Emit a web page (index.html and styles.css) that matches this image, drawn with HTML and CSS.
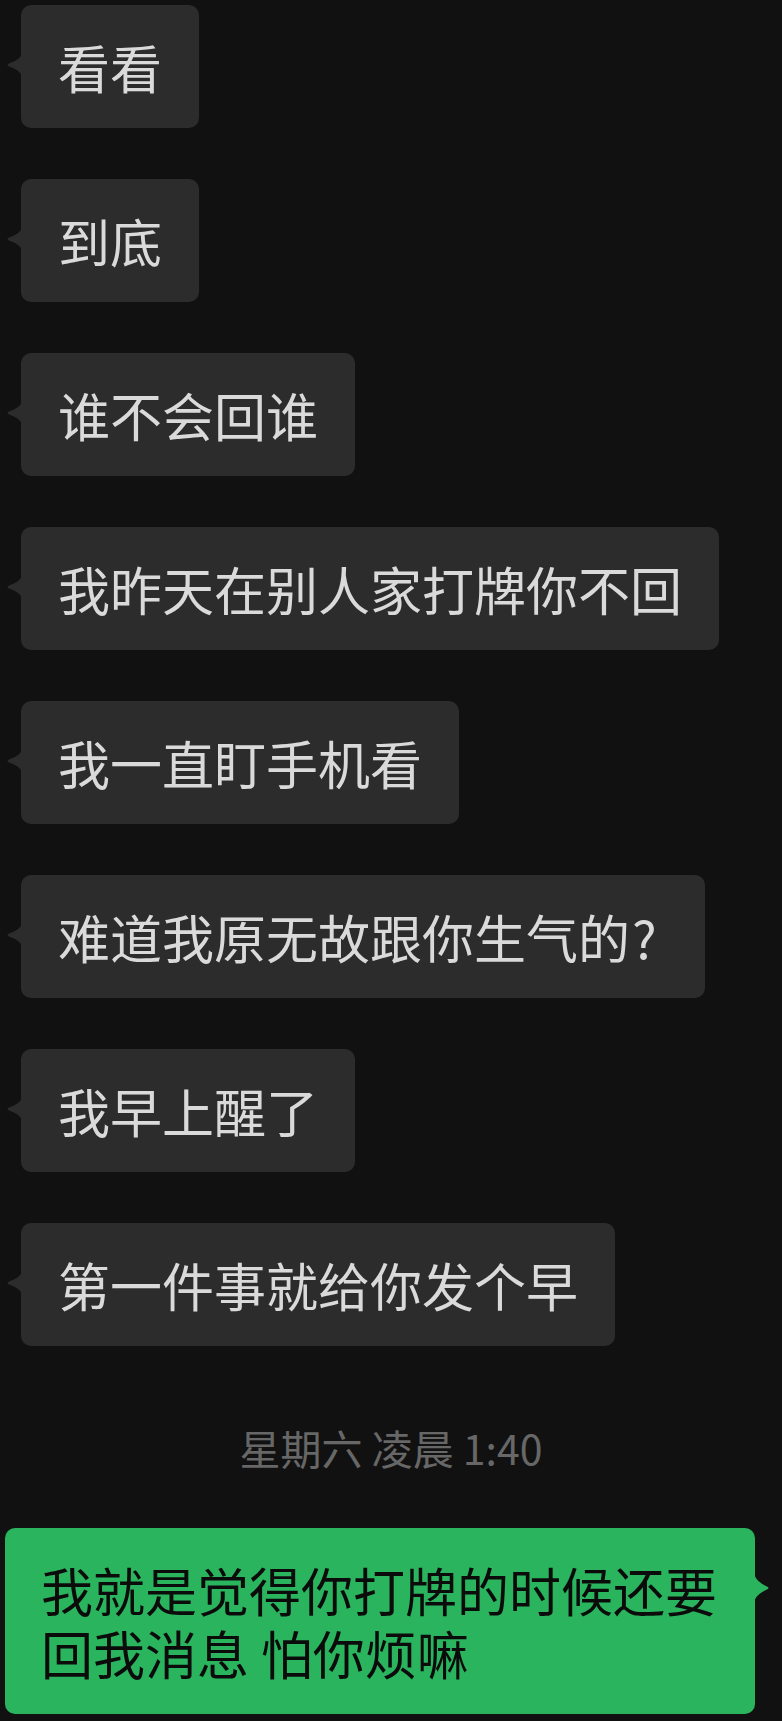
FILE: index.html
```html
<!DOCTYPE html>
<html lang="zh-CN">
<head>
  <meta charset="UTF-8" />
  <meta name="viewport" content="width=device-width, initial-scale=1.0"/>
  <title>聊天</title>
  <link rel="stylesheet" href="styles.css">
</head>
<body>
  <div class="chat">
    <div class="msg in">看看</div>
    <div class="msg in">到底</div>
    <div class="msg in">谁不会回谁</div>
    <div class="msg in">我昨天在别人家打牌你不回</div>
    <div class="msg in">我一直盯手机看</div>
    <div class="msg in">难道我原无故跟你生气的<span class="punct">?</span></div>
    <div class="msg in">我早上醒了</div>
    <div class="msg in">第一件事就给你发个早</div>
    <div class="time">星期六 凌晨 1:40</div>
    <div class="msg out">我就是觉得你打牌的时候还要回我消息 怕你烦嘛</div>
  </div>
</body>
</html>
```

FILE: styles.css
```css
* { box-sizing: border-box; }
body {
  margin: 0;
  padding: 0;
  background: #111111;
  font-family: "Noto Sans CJK SC", "Noto Sans", sans-serif;
  min-height: 100vh;
}
.chat {
  display: flex;
  flex-direction: column;
  gap: 51px;
  padding: 5px 0 0;
}
.msg {
  position: relative;
  font-size: 52px;
  line-height: 63px;
  padding: 30px 37px;
  border-radius: 10px;
  max-width: 750px;
}
.msg::before {
  content: "";
  position: absolute;
  width: 16px;
}
.in {
  align-self: flex-start;
  margin-left: 21px;
  background: #2c2c2c;
  color: #dadada;
}
.in::before {
  left: -15px;
  top: 47px;
  height: 26px;
  background: #2c2c2c;
  clip-path: path("M16 0 C16 6 10 9 3 11.5 Q0 13 3 14.5 C10 17 16 20 16 26 Z");
}
.punct { margin-left: 2px; margin-right: 11px; }
.out {
  align-self: flex-end;
  margin-right: 27px;
  margin-top: 6px;
  padding: 30px 36px;
  background: #2ab45e;
  color: #0b0b0b;
}
.out::before {
  right: -15px;
  top: 43px;
  height: 34px;
  background: #2ab45e;
  clip-path: path("M0 0 C0 8 6 12 13 15.5 Q16 17 13 18.5 C6 22 0 26 0 34 Z");
}
.time {
  margin-top: 26px;
  text-align: center;
  font-size: 41px;
  line-height: 48px;
  color: #676767;
}
```
